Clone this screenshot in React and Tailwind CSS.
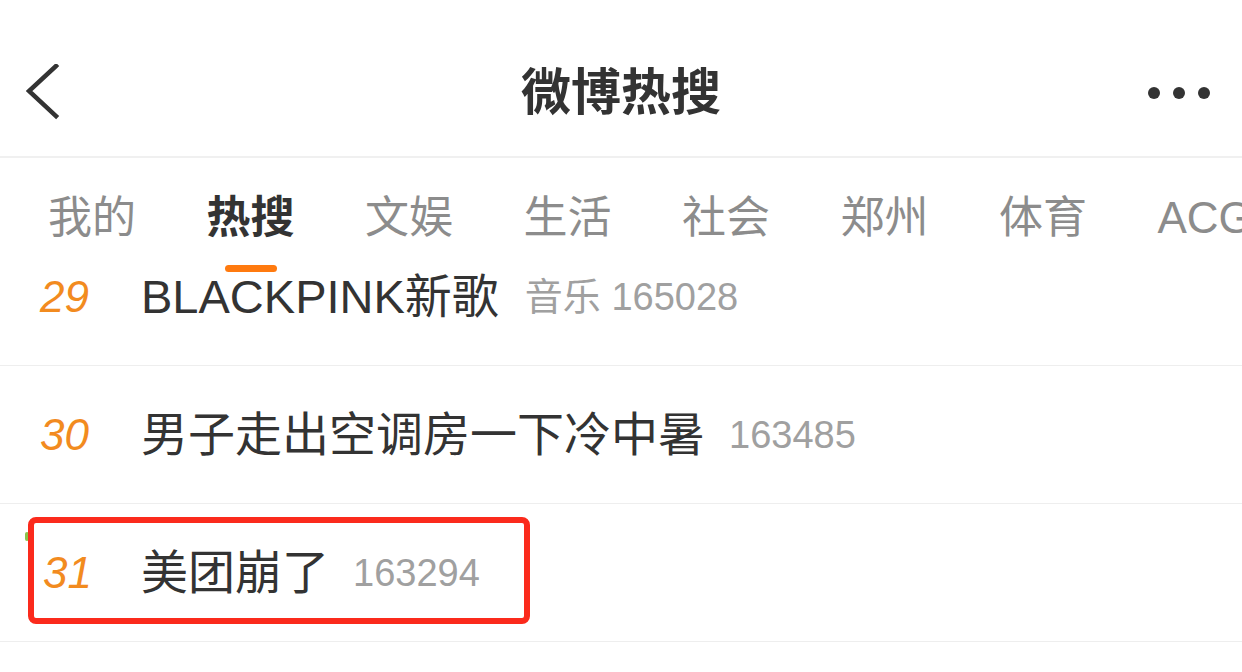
export default function App() {
  const font = { fontFamily: '"Liberation Sans", "Noto Sans CJK SC", sans-serif' };
  const tabs = ["我的", "热搜", "文娱", "生活", "社会", "郑州", "体育", "ACG"];
  return (
    <div className="w-[1242px] h-[672px] bg-white overflow-hidden" style={font}>
      {/* Header */}
      <div className="h-[158px] pt-[30px] px-[26px] grid grid-cols-[1fr_auto_1fr] items-center border-b-2 border-[#f0f0f0]">
        <svg width="34" height="58" viewBox="0 0 34 58" className="shrink-0">
          <path d="M30 2 L3 27 L30 52" fill="none" stroke="#333" strokeWidth="4.5" strokeLinecap="square" strokeLinejoin="miter" />
        </svg>
        <div className="text-[50px] font-bold text-[#333] leading-none">微博热搜</div>
        <div className="flex items-center justify-end gap-[13px] pr-[6px]">
          <span className="w-[12px] h-[12px] rounded-full bg-[#333]"></span>
          <span className="w-[12px] h-[12px] rounded-full bg-[#333]"></span>
          <span className="w-[12px] h-[12px] rounded-full bg-[#333]"></span>
        </div>
      </div>

      {/* Tabs */}
      <div className="h-[114px] pt-[38px] pl-[48px] flex gap-[70.5px] whitespace-nowrap overflow-hidden">
        {tabs.map((t, i) => (
          <div key={t} className="flex flex-col items-center shrink-0">
            <span className={"text-[44px] leading-none " + (i === 1 ? "font-bold text-[#333]" : "text-[#8c8c8c]")}>{t}</span>
            {i === 1 && <span className="mt-[25px] w-[52px] h-[7px] rounded-full bg-[#ff7a0f]"></span>}
          </div>
        ))}
      </div>

      {/* List */}
      <div>
        <div className="h-[94px] border-b border-[#eeeeee] flex items-start pt-[2px] pl-[40px]">
          <span className="w-[101px] text-[44px] italic text-[#f28b1f] leading-[46px]">29</span>
          <span className="text-[47px] text-[#333] leading-[46px]">BLACKPINK新歌</span>
          <span className="ml-[26px] text-[38px] text-[#a0a0a0] leading-[46px]">音乐 165028</span>
        </div>
        <div className="h-[138px] border-b border-[#eeeeee] flex items-center pl-[40px]">
          <span className="w-[101px] text-[44px] italic text-[#f28b1f] leading-[46px]">30</span>
          <span className="text-[47px] text-[#333] leading-[46px]">男子走出空调房一下冷中暑</span>
          <span className="ml-[24px] text-[38px] text-[#a0a0a0] leading-[46px]">163485</span>
        </div>
        <div className="h-[138px] border-b border-[#eeeeee] flex items-center pl-[40px] relative">
          <span className="w-[101px] pl-[3px] text-[44px] italic text-[#f28b1f] leading-[46px]">31</span>
          <span className="text-[47px] text-[#333] leading-[46px]">美团崩了</span>
          <span className="ml-[24px] text-[38px] text-[#a0a0a0] leading-[46px]">163294</span>
          <span className="absolute left-[25px] top-[28px] w-[4px] h-[9px] rounded-sm bg-[#8bc34a]"></span>
          <span className="absolute left-[28px] top-[13px] w-[502px] h-[107px] border-[6px] border-[#fb2a1c] rounded-[8px]"></span>
        </div>
      </div>
    </div>
  );
}
